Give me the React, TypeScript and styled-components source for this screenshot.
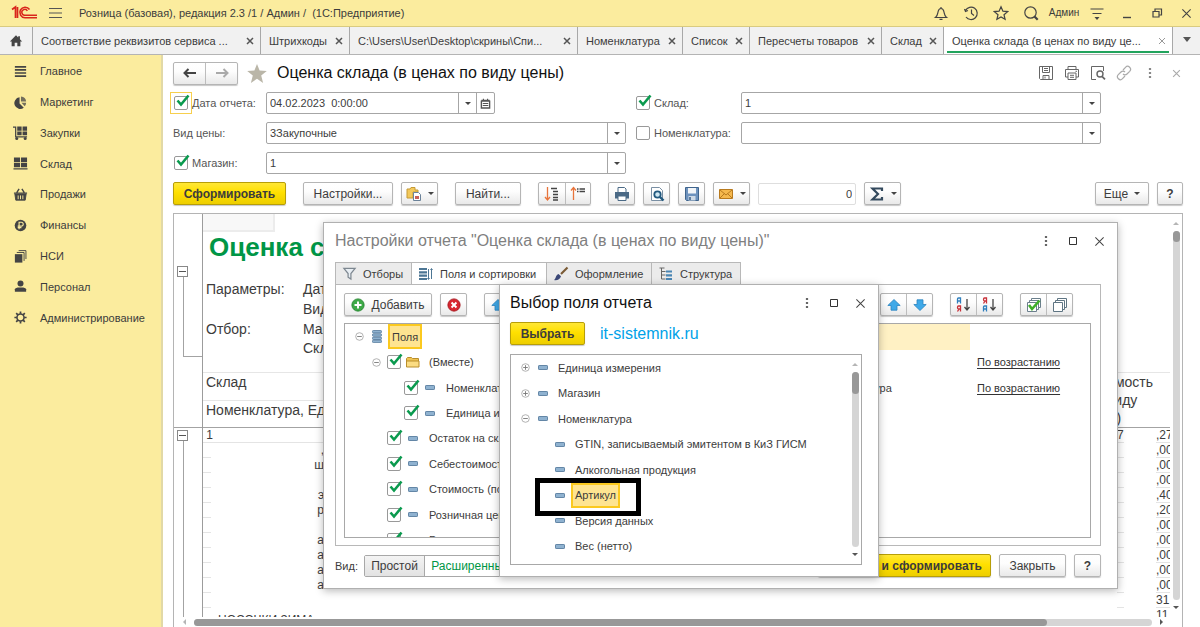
import React from "react";
import styled, { createGlobalStyle, css } from "styled-components";

const Global = createGlobalStyle`
  * { box-sizing: border-box; }
  html, body, #root { height: 100%; }
  body { margin: 0; overflow: hidden; background: #fff; }
  body, button, input { font-family: "Liberation Sans", Arial, sans-serif; font-size: 11px; color: #3c3c3c; }
  button { margin: 0; padding: 0; cursor: pointer; }
  svg { display: block; flex: none; }
`;

/* ---------- shell ---------- */

const App = styled.div`
  position: relative;
  height: 100%;
  display: flex;
  flex-direction: column;
  overflow: hidden;
`;

const TitleBar = styled.header`
  height: 27px;
  flex: none;
  display: flex;
  align-items: center;
  background: #fbec9e;
  border-bottom: 1px solid #d9cb80;
`;

const Logo = styled.div`
  width: 28px;
  margin: 0 10px 0 11px;
`;

const AppTitle = styled.h1`
  margin: 0 auto 0 17px;
  font-size: 11px;
  font-weight: 400;
  line-height: 16px;
  white-space: pre;
`;

const IconButton = styled.button<{ $w?: number }>`
  width: ${(p) => p.$w ?? 30}px;
  height: 24px;
  flex: none;
  display: flex;
  align-items: center;
  justify-content: center;
  border: 0;
  background: none;
`;

const UserName = styled.span`
  width: 36px;
  text-align: center;
  font-size: 10px;
  line-height: 16px;
`;

const TabBar = styled.nav`
  height: 28px;
  flex: none;
  display: flex;
  background: #f1f1f1;
  border-bottom: 1px solid #b4b4b4;
`;

const Tab = styled.div<{ $w: number; $active?: boolean }>`
  flex: 0 1 ${(p) => p.$w}px;
  min-width: 0;
  display: flex;
  align-items: center;
  padding: 0 4px 0 8px;
  border-right: 1px solid #a8a8a8;
  ${(p) =>
    p.$active &&
    css`
      flex-grow: 1;
      background: linear-gradient(#22a45d, #22a45d) 3px 24px / calc(100% - 6px) 2px no-repeat #fff;
    `}
`;

const TabLink = styled.a`
  flex: 1;
  min-width: 0;
  overflow: hidden;
  text-overflow: ellipsis;
  white-space: nowrap;
  line-height: 16px;
  color: inherit;
  text-decoration: none;
`;

const TabIcon = styled(IconButton)`
  border-right: 1px solid #a8a8a8;
  height: 27px;
`;

const Body = styled.div`
  flex: 1;
  min-height: 0;
  display: flex;
`;

const Sidebar = styled.nav`
  width: 163px;
  flex: none;
  background: #fbec9e;
  border-right: 2px solid #e2d9a6;
`;

const Menu = styled.ul`
  margin: 1px 0 0;
  padding: 0;
  height: 277px;
  list-style: none;
  display: grid;
  grid-auto-rows: 1fr;
`;

const MenuLink = styled.a`
  height: 100%;
  display: flex;
  align-items: center;
  gap: 12px;
  padding-left: 13px;
  color: inherit;
  text-decoration: none;
`;

const Main = styled.main`
  flex: 1;
  min-width: 0;
  display: flex;
  flex-direction: column;
  padding: 0 17px 0 10px;
`;

/* ---------- form header ---------- */

const PageHead = styled.div`
  display: flex;
  align-items: center;
  height: 36px;
  margin-right: -6px;
`;

const PageTitle = styled.h2`
  margin: 0 auto 0 1px;
  font-size: 16px;
  font-weight: 400;
  line-height: 20px;
  color: #111;
`;

const raised = css`
  border: 1px solid #b5b5b5;
  border-radius: 2px;
  background: linear-gradient(#fff, #fdfdfd 40%, #e9e9e9);
  box-shadow: 0 1px 1px rgba(0, 0, 0, 0.22);
`;

const Btn = styled.button<{ $w: number; $primary?: boolean }>`
  ${raised}
  width: ${(p) => p.$w}px;
  height: 23px;
  flex: none;
  display: flex;
  align-items: center;
  justify-content: center;
  gap: 6px;
  font-size: 12px;
  white-space: nowrap;
  ${(p) =>
    p.$primary &&
    css`
      border-color: #b79e08;
      background: linear-gradient(#ffe736, #ffe000 45%, #edce00);
      font-weight: 700;
    `}
`;

const Group = styled.div`
  ${raised}
  display: flex;
  flex: none;
  height: 23px;
`;

const GroupBtn = styled.button<{ $w?: number }>`
  width: ${(p) => p.$w ?? 26}px;
  display: flex;
  align-items: center;
  justify-content: center;
  border: 0;
  background: none;
  & + & {
    border-left: 1px solid #bdbdbd;
  }
`;

const Caret = styled.span`
  border: 3px solid transparent;
  border-top-color: #444;
  border-bottom-width: 0;
`;

const Form = styled.div`
  display: grid;
  grid-template-columns: 93px minmax(0, 1fr) 115px minmax(0, 1fr);
  row-gap: 8px;
  padding: 1px 82px 0 0;
  & > :nth-child(4n + 3) {
    margin-left: 9px;
  }
`;

const FormLabel = styled.div`
  height: 22px;
  display: flex;
  align-items: center;
  gap: 4px;
  white-space: nowrap;
  color: #555;
  & > span:first-child {
    margin-left: 1px;
  }
`;

const CheckWrap = styled.span<{ $focus?: boolean }>`
  position: relative;
  flex: none;
  display: flex;
  width: 14px;
  height: 14px;
  svg {
    position: absolute;
    left: 2px;
    top: -2px;
    pointer-events: none;
  }
  ${(p) =>
    p.$focus &&
    css`
      outline: 1px solid #f7cf4d;
      outline-offset: 3px;
    `}
`;

const CheckInput = styled.input`
  appearance: none;
  margin: 0;
  width: 14px;
  height: 14px;
  border: 1px solid #999;
  border-radius: 2px;
  background: #fff;
`;

const Combo = styled.div<{ $w?: number }>`
  height: 22px;
  ${(p) => p.$w && `width: ${p.$w}px;`}
  display: flex;
  border: 1px solid #a6a6a6;
  border-radius: 2px;
  background: #fff;
`;

const ComboInput = styled.input`
  flex: 1;
  min-width: 0;
  padding: 0 3px;
  border: 0;
  background: none;
  outline: 0;
  white-space: pre;
`;

const ComboBtn = styled.button`
  width: 18px;
  flex: none;
  display: flex;
  align-items: center;
  justify-content: center;
  border: 0;
  border-left: 1px solid #a6a6a6;
  background: none;
`;

const Toolbar = styled.div`
  display: flex;
  align-items: center;
  gap: 8px;
  margin: 8px 0;
`;

const Space = styled.span<{ $grow?: boolean }>`
  width: 1px;
  ${(p) => p.$grow && "flex: 1;"}
`;

const SumInput = styled.input`
  width: 98px;
  height: 22px;
  padding: 0 3px;
  border: 1px solid #dedede;
  border-radius: 2px;
  text-align: right;
`;

/* ---------- report ---------- */

const Report = styled.section`
  flex: 1;
  min-height: 0;
  display: flex;
  flex-direction: column;
  border: 1px solid #b4b4b4;
  border-bottom: 0;
`;

const ReportBody = styled.div`
  flex: 1;
  min-height: 0;
  display: flex;
  overflow: hidden;
`;

const Gutter = styled.div`
  width: 29px;
  flex: none;
  border-right: 1px solid #9c9c9c;
`;

const Outline = styled.div<{ $h: number; $pad: number; $end?: boolean }>`
  height: ${(p) => p.$h}px;
  padding: ${(p) => p.$pad}px 0 0 3px;
  display: flex;
  flex-direction: column;
  &::after {
    content: "";
    flex: 1;
    margin-left: 6px;
    border-left: 1px solid #a3a3a3;
    ${(p) => p.$end && "border-bottom: 1px solid #a3a3a3;"}
  }
  & + & {
    margin-top: 70px;
    border-top: 1px solid #a3a3a3;
  }
`;

const Fold = styled.button`
  width: 11px;
  height: 11px;
  display: flex;
  align-items: center;
  justify-content: center;
  border: 1px solid #888;
  background: #fff;
  &::after {
    content: "";
    width: 7px;
    height: 1px;
    background: #555;
  }
`;

const Sheet = styled.div`
  flex: 1;
  min-width: 0;
`;

const ActiveCell = styled.div`
  width: 72px;
  height: 18px;
  background: #f8f8f8;
  border: solid #ececec;
  border-width: 0 2px 2px 0;
`;

const ReportTitle = styled.h3`
  margin: 0;
  padding-left: 6px;
  font-size: 26px;
  line-height: 31px;
  color: #009646;
  white-space: nowrap;
`;

const Params = styled.dl`
  margin: 16px 0 15px;
  padding-left: 3px;
  display: grid;
  grid-template-columns: 97px 1fr;
  grid-template-rows: 20px 20px 20px 18px;
  align-items: center;
  font-size: 14px;
  line-height: 18px;
  dt { grid-column: 1; }
  dd { grid-column: 2; margin: 0; white-space: nowrap; }
`;

const SheetTable = styled.table`
  width: 100%;
  table-layout: fixed;
  border-collapse: collapse;
  th {
    padding: 0 3px;
    height: 27px;
    font-size: 14px;
    font-weight: 400;
    line-height: 18px;
    text-align: left;
    vertical-align: top;
    white-space: nowrap;
    border-top: 1px solid #e6e6e6;
  }
  th[rowspan] { padding: 0; }
  thead { border-bottom: 1px solid #a3a3a3; }
  td {
    height: 15px;
    padding: 0;
    font-size: 12px;
    line-height: 14px;
    vertical-align: top;
    white-space: nowrap;
    overflow: hidden;
  }
`;

const Line = styled.td`
  border-bottom: 1px solid #e4e4e4;
`;

const Right = styled.td`
  text-align: right;
`;

const Cut = styled.td`
  && { padding: 5px 0 0 15px; }
`;

const VScroll = styled.div`
  width: 12px;
  flex: none;
  display: flex;
  flex-direction: column;
  align-items: center;
  gap: 6px;
  padding: 8px 0;
`;

const VTrack = styled.div`
  flex: 1;
  width: 7px;
  border-radius: 4px;
  background: #d5d5d5;
`;

const VThumb = styled.div<{ $h: number }>`
  height: ${(p) => p.$h}px;
  border-radius: 4px;
  background: #989898;
`;

const Arrow = styled.span<{ $dir: "up" | "down" | "left" | "right"; $dim?: boolean }>`
  border: 3px solid transparent;
  ${(p) => {
    const c = p.$dim ? "#b5b5b5" : "#555";
    if (p.$dir === "up") return `border-bottom-color: ${c}; border-top-width: 0;`;
    if (p.$dir === "down") return `border-top-color: ${c}; border-bottom-width: 0;`;
    if (p.$dir === "left") return `border-right-color: ${c}; border-left-width: 0;`;
    return `border-left-color: ${c}; border-right-width: 0;`;
  }}
`;

const HScroll = styled.div`
  height: 10px;
  flex: none;
  display: flex;
  align-items: center;
  gap: 8px;
  padding: 0 19px 0 9px;
`;

const HTrack = styled.div`
  flex: 1;
  height: 7px;
  border-radius: 4px;
  background: #d5d5d5;
`;

const HThumb = styled.div`
  width: 89%;
  height: 7px;
  border-radius: 4px;
  background: #989898;
`;

/* ---------- floating windows ---------- */

const Window = styled.section<{ $x: number; $y: number; $w: number; $h: number; $pad: number }>`
  position: absolute;
  left: ${(p) => p.$x}px;
  top: ${(p) => p.$y}px;
  width: ${(p) => p.$w}px;
  height: ${(p) => p.$h}px;
  display: flex;
  flex-direction: column;
  padding: 0 16px 11px ${(p) => p.$pad}px;
  background: #fff;
  border: 1px solid #b0b0b0;
  box-shadow: 0 2px 8px rgba(0, 0, 0, 0.28);
`;

const WindowHead = styled.div`
  display: flex;
  align-items: center;
  height: 36px;
  flex: none;
  margin-right: -12px;
`;

const WindowTitle = styled.h2<{ $dim?: boolean }>`
  margin: 0 auto 0 0;
  font-size: 16px;
  font-weight: 400;
  line-height: 20px;
  white-space: nowrap;
  color: ${(p) => (p.$dim ? "#808080" : "#111")};
`;

const Pages = styled.div`
  display: flex;
  margin-top: 3px;
`;

const Page = styled.button<{ $w: number; $active?: boolean }>`
  width: ${(p) => p.$w}px;
  height: 23px;
  display: flex;
  align-items: center;
  gap: 6px;
  padding-left: 6px;
  white-space: nowrap;
  border: 1px solid #b8b8b8;
  border-width: 1px 1px 1px 0;
  background: #ebebeb;
  &:first-child { border-left-width: 1px; }
  ${(p) => p.$active && "background: #fff; border-bottom-color: #fff;"}
`;

const Panel = styled.div`
  flex: 1;
  min-height: 0;
  margin-top: -1px;
  display: grid;
  grid-template-columns: 1fr 379px;
  grid-template-rows: 23px minmax(0, 1fr);
  gap: 7px 12px;
  padding: 8px 9px 7px 8px;
  border: 1px solid #b8b8b8;
`;

const Tools = styled.div<{ $end?: boolean }>`
  display: flex;
  gap: ${(p) => (p.$end ? 17 : 8)}px;
  ${(p) => p.$end && "justify-content: flex-end; padding-right: 18px;"}
`;

const Box = styled.div`
  min-height: 0;
  flex: 1;
  display: flex;
  overflow: hidden;
  border: 1px solid #a8a8a8;
`;

const Tree = styled.ul<{ $h: number }>`
  flex: 1;
  height: ${(p) => p.$h}px;
  margin: 0;
  padding: 0;
  list-style: none;
  display: grid;
  grid-auto-rows: 1fr;
`;

const Node = styled.li<{ $level: number }>`
  display: flex;
  align-items: center;
  padding-left: ${(p) => 6 + p.$level * 17}px;
`;

const Slot = styled.span<{ $w: number }>`
  width: ${(p) => p.$w}px;
  flex: none;
  display: flex;
  justify-content: center;
`;

const NodeText = styled.span<{ $on?: boolean }>`
  align-self: stretch;
  display: flex;
  align-items: center;
  margin-left: 2px;
  padding: 0 2px;
  border: 2px solid transparent;
  white-space: nowrap;
  ${(p) => p.$on && "border-color: #fbc91f; background: #fee491;"}
`;

const Callout = styled.span`
  position: absolute;
  left: -34px;
  right: -21px;
  top: -5px;
  bottom: -8px;
  border: 5px solid #000;
  pointer-events: none;
`;

const Anchor = styled.span`
  position: relative;
  align-self: stretch;
  display: flex;
`;

const SortRow = styled.li<{ $on?: boolean }>`
  display: flex;
  align-items: center;
  padding-left: 105px;
  ${(p) => p.$on && "width: 257px; background: #fff1c4;"}
`;

const SortField = styled.span`
  width: 159px;
`;

const SortLink = styled.a`
  color: #333;
  text-decoration: underline;
  text-underline-offset: 2px;
`;

const Footer = styled.div`
  display: flex;
  align-items: center;
  gap: 8px;
  margin-top: 8px;
`;

const ViewLabel = styled.span`
  width: 21px;
  white-space: nowrap;
`;

const Toggle = styled.div`
  display: flex;
  height: 22px;
  margin-right: auto;
  border: 1px solid #a8a8a8;
  border-radius: 2px;
`;

const ToggleBtn = styled.button<{ $w: number; $on?: boolean }>`
  width: ${(p) => p.$w}px;
  border: 0;
  font-size: 12px;
  background: linear-gradient(#f4f4f4, #e2e2e2);
  ${(p) => p.$on && "background: #fff; color: #009646; border-left: 1px solid #a8a8a8;"}
`;

const PickRow = styled.div`
  display: flex;
  align-items: center;
  gap: 15px;
  margin: 1px 0 9px;
`;

const SiteLink = styled.a`
  font-size: 16px;
  line-height: 20px;
  color: #00a2e8;
  text-decoration: none;
`;

/* ---------- icons ---------- */

type IP = { s?: number; children?: React.ReactNode; c?: string; w?: number };
const Ico = ({ s = 16, c = "#444", w = 1, children }: IP) => (
  <svg width={s} height={s} viewBox="0 0 16 16" fill="none" stroke={c} strokeWidth={w} aria-hidden="true">
    {children}
  </svg>
);

const Cross = ({ s = 8, c = "#555", w = 3 }: IP) => (
  <Ico s={s} c={c} w={w}><path d="M2 2l12 12M14 2L2 14" /></Ico>
);
const Dots = ({ c = "#666" }: IP) => (
  <Ico c={c}><path d="M8 3v2M8 7v2M8 11v2" strokeWidth="2.2" /></Ico>
);
const Square = () => <Ico c="#333" w={1}><path d="M4.500 4.500h7v7h-7z" /></Ico>;
const Dash = () => (
  <svg width="10" height="5" viewBox="0 0 10 5" aria-hidden="true">
    <rect x=".5" y=".5" width="9" height="4" rx=".6" fill="#8fb2d0" stroke="#6386a6" />
  </svg>
);
const Stack = () => (
  <svg width="10" height="13" viewBox="0 0 10 13" fill="#8fb2d0" stroke="#54799a" strokeWidth=".8" aria-hidden="true">
    <rect x=".5" y=".5" width="9" height="2.4" rx=".8" /><rect x=".5" y="3.8" width="9" height="2.4" rx=".8" />
    <rect x=".5" y="7.1" width="9" height="2.4" rx=".8" /><rect x=".5" y="10.2" width="9" height="2.4" rx=".8" />
  </svg>
);
const FolderIco = () => (
  <svg width="14" height="12" viewBox="0 0 14 12" stroke="#b98e2c" aria-hidden="true">
    <path d="M.5 10.500V2.500l1-1h4l1 1h6v8z" fill="#f0c453" /><path d="M.5 11V5h12.500v6z" fill="#fbdc82" />
  </svg>
);
const Expander = ({ plus }: { plus?: boolean }) => (
  <svg width="9" height="9" viewBox="0 0 9 9" fill="#fff" stroke="#aaa" strokeWidth=".9" aria-hidden="true">
    <circle cx="4.500" cy="4.500" r="3.800" />
    <path d={plus ? "M2.200 4.500h4.600M4.500 2.200v4.600" : "M2.200 4.500h4.600"} stroke="#777" />
  </svg>
);
const Up = ({ flip }: { flip?: boolean }) => (
  <svg width="14" height="12" viewBox="0 0 14 12" fill="#3fa9e8" stroke="#2b83bf" strokeWidth=".8" aria-hidden="true">
    <path d={flip ? "M7 11.500L.8 5.500H4V.8h6v4.700h3.200z" : "M7 .5l6.200 6H10v4.700H4V6.500H.8z"} />
  </svg>
);
const AZ = ({ flip }: { flip?: boolean }) => {
  const a = <path d="M1.500 6.500V2q0-1 1-1h2v5.500M1.500 4h3" stroke="#2f7fbd" />;
  const ya = <path d="M4.500 14.500V9h-2Q1.500 9 1.500 10.500t1 1.500h2M3 12l-1.500 2.500" stroke="#c8313a" />;
  return (
    <Ico w={1.3}>
      <g transform={flip ? "translate(0 8)" : undefined}>{a}</g>
      <g transform={flip ? "translate(0 -8)" : undefined}>{ya}</g>
      <path d="M11 2v10M8.500 10l2.500 3 2.500-3" stroke="#444" />
    </Ico>
  );
};

const menu: [string, React.ReactNode][] = [
  ["Главное", <path d="M2 3h12M2 6.300h12M2 9.600h12M2 13h12" strokeWidth="1.800" />],
  ["Маркетинг", <g stroke="none" fill="#444"><path d="M7 2.500V9l4.500 4.500A6.200 6.200 0 1 1 7 2.500z" /><path d="M8.500 1.500A6 6 0 0 1 14 7H8.500zM9 8.300h5a6 6 0 0 1-1.500 3.800z" fillOpacity=".75" /></g>],
  ["Закупки", <g fill="#444" stroke="none"><path d="M0 1.500h3.500V12H15v1.300H2.200V2.800H0z" /><path d="M4.500 1.500h4.700V6H4.500zM10.200 1.500H15V6h-4.800zM4.500 6.800h4.700v4H4.500zM10.200 6.800H15v4h-4.800z" /><circle cx="4" cy="14.300" r="1.600" /><circle cx="13" cy="14.300" r="1.600" /></g>],
  ["Склад", <g fill="#444" stroke="none"><path d="M1 1.500h6.500v5H1zM8.500 1.500H15v5H8.500zM1 7.300h6.500v4.700H1zM8.500 7.300H15v4.700H8.500zM.5 13h15v1.500H.5z" /></g>],
  ["Продажи", <g><path d="M1 6.500h14M4 6l2.500-4M12 6L9.500 2" strokeWidth="1.500" /><path d="M2 7.500h12l-1 6.500H3z" fill="#444" /><path d="M5.500 9v4M8 9v4M10.500 9v4" stroke="#fbec9e" /></g>],
  ["Финансы", <g><circle cx="8" cy="8" r="6.200" fill="#444" stroke="none" /><path d="M6.500 12V4.500h2.300a2 2 0 0 1 0 4.200H5M5 10.300h4" stroke="#fbec9e" strokeWidth="1.200" /></g>],
  ["НСИ", <g><path d="M2 5.500h8v9H2z" fill="#444" stroke="none" /><path d="M4 3.700h7.800v9M6 1.700h7.800v9" /></g>],
  ["Персонал", <g fill="#444" stroke="none"><circle cx="8" cy="4.800" r="3.200" /><path d="M2 13.500V11q0-1.500 3-2h6q3 .5 3 2v2.500z" /></g>],
  ["Администрирование", <g><circle cx="8" cy="8" r="3.800" strokeWidth="1.700" /><path d="M8 1.500v2.500M8 12v2.500M1.500 8H4M12 8h2.500M3.400 3.400l1.800 1.800M10.800 10.800l1.800 1.800M12.600 3.400l-1.800 1.800M5.200 10.800l-1.800 1.800" strokeWidth="1.800" /></g>],
];

const tabs: [string, number][] = [
  ["Соответствие реквизитов сервиса ...", 228],
  ["Штрихкоды", 89],
  ["C:\\Users\\User\\Desktop\\скрины\\Спи...", 228],
  ["Номенклатура", 105],
  ["Список", 67],
  ["Пересчеты товаров", 132],
  ["Склад", 62],
];

/* ---------- parts ---------- */

const Check = ({ id, name, on, focus }: { id?: string; name?: string; on?: boolean; focus?: boolean }) => (
  <CheckWrap $focus={focus}>
    <CheckInput type="checkbox" id={id} aria-label={name} defaultChecked={on} />
    {on && (
      <svg width="14" height="13" viewBox="0 0 14 13" fill="none" stroke="#0a9a4e" strokeWidth="2.600" aria-hidden="true">
        <path d="M1.500 6.500l3.500 4L12.500 1.500" />
      </svg>
    )}
  </CheckWrap>
);

const Field = ({ label, value }: { label: string; value: string }) => (
  <Combo>
    <ComboInput aria-label={label} defaultValue={value} />
    <ComboBtn aria-label={`${label}: выбрать`}><Caret /></ComboBtn>
  </Combo>
);

const fields: { t: string; level: number; kind?: "root" | "folder" }[] = [
  { t: "Поля", level: 0, kind: "root" },
  { t: "(Вместе)", level: 1, kind: "folder" },
  { t: "Номенклатура", level: 2 },
  { t: "Единица измерения", level: 2 },
  { t: "Остаток на складе", level: 1 },
  { t: "Себестоимость", level: 1 },
  { t: "Стоимость (по виду)", level: 1 },
  { t: "Розничная цена", level: 1 },
  { t: "Розничная стоимость", level: 1 },
];

const choices: { t: string; level: number; exp?: "plus" | "minus" }[] = [
  { t: "Единица измерения", level: 0, exp: "plus" },
  { t: "Магазин", level: 0, exp: "plus" },
  { t: "Номенклатура", level: 0, exp: "minus" },
  { t: "GTIN, записываемый эмитентом в КиЗ ГИСМ", level: 1 },
  { t: "Алкогольная продукция", level: 1 },
  { t: "Артикул", level: 1 },
  { t: "Версия данных", level: 1 },
  { t: "Вес (нетто)", level: 1 },
];

const rows: [string, string][] = [
  [",", ",00"], ["ш", ",00"], ["", ",00"], ["э", ",40"], ["р", ",20"], ["", ",00"],
  ["а", ",00"], ["а", ",00"], ["а", ",00"], ["а", ",00"], ["", "31"],
];

const WindowButtons = () => (
  <>
    <IconButton $w={27} aria-label="Меню"><Dots /></IconButton>
    <IconButton $w={27} aria-label="Развернуть"><Square /></IconButton>
    <IconButton $w={27} aria-label="Закрыть окно"><Cross s={11} c="#444" w={1.5} /></IconButton>
  </>
);

const SettingsWindow = () => (
  <Window $x={323} $y={222} $w={795} $h={367} $pad={11} role="dialog" aria-label="Настройки отчета">
    <WindowHead>
      <WindowTitle $dim>Настройки отчета "Оценка склада (в ценах по виду цены)"</WindowTitle>
      <WindowButtons />
    </WindowHead>
    <Pages>
      <Page $w={77}>
        <Ico c="#7d8790" s={15}><path d="M2 2.500h12L9.500 8v6L6.500 12V8z" fill="#e8eef3" strokeWidth="1.300" /></Ico>Отборы
      </Page>
      <Page $w={135} $active>
        <Ico c="#4d7694"><path d="M1 3h8M1 6.300h8M1 9.600h8M1 13h8" strokeWidth="2.200" /><path d="M10.500 3v10M13.500 3v10M12.500 4l1-1.500 1 1.500M9.500 12l1 1.500 1-1.500" /></Ico>Поля и сортировки
      </Page>
      <Page $w={105}>
        <Ico><path d="M14.500 1.500L8 8" stroke="#7a5a35" strokeWidth="2.200" /><path d="M1 14c2-1 1.500-5 4.500-6l2.500 2.300c-1 3-4 4.500-7 3.700z" fill="#3c4878" stroke="none" /></Ico>Оформление
      </Page>
      <Page $w={89}>
        <Ico><path d="M1.500 2h5M3.500 2v11h4M3.500 5.500h4M3.500 9h4" stroke="#666" /><path d="M8 5.500h6M8 9.300h6M8 13h6" stroke="#4a86b4" strokeWidth="2.200" /></Ico>Структура
      </Page>
    </Pages>
    <Panel>
      <Tools>
        <Btn $w={88}>
          <Ico s={14}><circle cx="8" cy="8" r="7" fill="#3da947" stroke="#23852e" /><path d="M8 4v8M4 8h8" stroke="#fff" strokeWidth="2.200" /></Ico>Добавить
        </Btn>
        <Btn $w={27} aria-label="Удалить">
          <Ico s={14}><circle cx="8" cy="8" r="7" fill="#d8262f" stroke="#a3141c" /><path d="M5.200 5.200l5.600 5.600M10.800 5.200l-5.600 5.600" stroke="#fff" strokeWidth="2.200" /></Ico>
        </Btn>
        <Space />
        <Group>
          <GroupBtn aria-label="Поле вверх"><Up /></GroupBtn>
          <GroupBtn aria-label="Поле вниз"><Up flip /></GroupBtn>
        </Group>
      </Tools>
      <Tools $end>
        <Group>
          <GroupBtn $w={25} aria-label="Вверх"><Up /></GroupBtn>
          <GroupBtn aria-label="Вниз"><Up flip /></GroupBtn>
        </Group>
        <Group>
          <GroupBtn $w={25} aria-label="По возрастанию"><AZ /></GroupBtn>
          <GroupBtn aria-label="По убыванию"><AZ flip /></GroupBtn>
        </Group>
        <Group>
          <GroupBtn $w={25} aria-label="Включить все">
            <Ico c="#6b7f8c"><path d="M5.500 4V1.500h9v9H12M3.500 6V3.500h9v9H10M1.500 5.500h9v9h-9z" fill="#fff" /><path d="M3 8l3 4 7.500-8.500" stroke="#3fae29" strokeWidth="2.600" /></Ico>
          </GroupBtn>
          <GroupBtn aria-label="Выключить все">
            <Ico c="#5f7583"><path d="M5.500 4V1.500h9v9H12M3.500 6V3.500h9v9H10M1.500 5.500h9v9h-9z" fill="#fff" /></Ico>
          </GroupBtn>
        </Group>
      </Tools>
      <Box>
        <Tree $h={229}>
          {fields.map((f) => (
            <Node key={f.t} $level={f.level}>
              <Slot $w={17}>{f.kind && <Expander />}</Slot>
              {f.kind !== "root" && <Slot $w={17}><Check name={f.t} on /></Slot>}
              <Slot $w={f.kind === "root" ? 18 : 21}>
                {f.kind === "root" ? <Stack /> : f.kind === "folder" ? <FolderIco /> : <Dash />}
              </Slot>
              <NodeText $on={f.kind === "root"}>{f.t}</NodeText>
            </Node>
          ))}
        </Tree>
      </Box>
      <Box>
        <Tree $h={77}>
          <SortRow $on />
          <SortRow><SortField>Склад</SortField><SortLink href="#asc">По возрастанию</SortLink></SortRow>
          <SortRow><SortField>Номенклатура</SortField><SortLink href="#asc">По возрастанию</SortLink></SortRow>
        </Tree>
      </Box>
    </Panel>
    <Footer>
      <ViewLabel>Вид:</ViewLabel>
      <Toggle>
        <ToggleBtn $w={59}>Простой</ToggleBtn>
        <ToggleBtn $w={92} $on>Расширенный</ToggleBtn>
      </Toggle>
      <Btn $w={173} $primary>Закрыть и сформировать</Btn>
      <Btn $w={67}>Закрыть</Btn>
      <Btn $w={27}><b>?</b></Btn>
    </Footer>
  </Window>
);

const PickWindow = () => (
  <Window $x={499} $y={284} $w={380} $h={293} $pad={10} role="dialog" aria-label="Выбор поля отчета">
    <WindowHead>
      <WindowTitle>Выбор поля отчета</WindowTitle>
      <WindowButtons />
    </WindowHead>
    <PickRow>
      <Btn $w={75} $primary>Выбрать</Btn>
      <SiteLink href="#site">it-sistemnik.ru</SiteLink>
    </PickRow>
    <Box>
      <Tree $h={204}>
        {choices.map((f) => (
          <Node key={f.t} $level={f.level}>
            <Slot $w={17}>{f.exp && <Expander plus={f.exp === "plus"} />}</Slot>
            <Slot $w={18}><Dash /></Slot>
            <Anchor>
              <NodeText $on={f.t === "Артикул"}>{f.t}</NodeText>
              {f.t === "Артикул" && <Callout />}
            </Anchor>
          </Node>
        ))}
      </Tree>
      <VScroll>
        <Arrow $dir="up" $dim />
        <VTrack><VThumb $h={22} /></VTrack>
        <Arrow $dir="down" />
      </VScroll>
    </Box>
  </Window>
);

export default function Root() {
  return (
    <App>
      <Global />
      <TitleBar>
        <Logo>
          <svg width="28" height="16" viewBox="0 0 28 16" fill="none" stroke="#d9261c" aria-label="1С" role="img">
            <path d="M1 4.500l3.500-2.500V13M6.500 13V2" strokeWidth="1.700" />
            <path d="M18.500 4.500A5.300 5.300 0 1 0 14 12.800H26" strokeWidth="1.600" />
            <path d="M16.300 6A2.900 2.900 0 1 0 14 10.200H26" strokeWidth="1.500" />
          </svg>
        </Logo>
        <svg width="13" height="12" viewBox="0 0 13 12" stroke="#555" strokeWidth="1.200" aria-hidden="true"><path d="M0 1.500h13M0 6h13M0 10.500h13" /></svg>
        <AppTitle>{"Розница (базовая), редакция 2.3 /1 / Админ /  (1С:Предприятие)"}</AppTitle>
        <IconButton aria-label="Уведомления"><Ico w={1.2}><path d="M2.500 12.500h11c-2-1.500-2-3-2.500-5.500C10.500 4.500 9.500 3.500 8 3.500S5.500 4.500 5 7c-.5 2.500-.5 4-2.500 5.500zM8 3.500V2M6.500 14.300h3" /></Ico></IconButton>
        <IconButton aria-label="История"><Ico w={1.2}><path d="M2.500 5.500A6.200 6.200 0 1 1 3 12M1.500 4l1 2.500L5 5.500M8.500 4.500v4l2.500 2" /></Ico></IconButton>
        <IconButton aria-label="Избранное"><Ico w={1.2}><path d="M8 1.800l1.900 4.400 4.700.4-3.600 3.100 1.100 4.600L8 11.900l-4.100 2.400L5 9.700 1.400 6.600l4.700-.4z" /></Ico></IconButton>
        <IconButton aria-label="Поиск"><Ico w={1.2}><circle cx="7.500" cy="7.500" r="5.700" /><path d="M11.500 11.500l3.200 3.200" strokeWidth="2.200" /></Ico></IconButton>
        <UserName>Админ</UserName>
        <IconButton aria-label="Сервис"><Ico w={1.2}><path d="M1.500 4h13M3.500 8.500h9" /><path d="M5.500 12h5L8 15z" fill="#444" stroke="none" /></Ico></IconButton>
        <IconButton aria-label="Свернуть"><Ico w={1.4}><path d="M4 12.500h8" /></Ico></IconButton>
        <IconButton aria-label="Восстановить"><Ico w={1.2}><path d="M4 6.500h6v5.500H4zM6 6V4h6.500v6H10" /></Ico></IconButton>
        <IconButton $w={28} aria-label="Выход"><Cross s={11} c="#444" w={1.6} /></IconButton>
      </TitleBar>
      <TabBar>
        <TabIcon $w={33} aria-label="Начальная страница">
          <Ico s={14}><path d="M8 1.500L1 8.500h2V14h3.500v-4h3v4H13V8.500h2L12.500 6V2.500h-2V4z" fill="#444" stroke="none" /></Ico>
        </TabIcon>
        {tabs.map(([t, w]) => (
          <Tab key={t} $w={w}>
            <TabLink href="#tab">{t}</TabLink>
            <IconButton $w={13} aria-label="Закрыть вкладку"><Cross /></IconButton>
          </Tab>
        ))}
        <Tab $w={229} $active>
          <TabLink href="#tab">Оценка склада (в ценах по виду це...</TabLink>
          <IconButton $w={13} aria-label="Закрыть вкладку"><Cross c="#999" w={2} /></IconButton>
        </Tab>
        <IconButton $w={27} aria-label="Все вкладки"><svg width="8" height="5" aria-hidden="true"><path d="M0 0h8L4 5z" fill="#555" /></svg></IconButton>
      </TabBar>
      <Body>
        <Sidebar>
          <Menu>
            {menu.map(([t, icon]) => (
              <li key={t}><MenuLink href="#section"><Ico s={15}>{icon}</Ico>{t}</MenuLink></li>
            ))}
          </Menu>
        </Sidebar>
        <Main>
          <PageHead>
            <Group>
              <GroupBtn $w={31} aria-label="Назад"><Ico c="#444" w={2}><path d="M14 8H3M6.500 4L2.500 8l4 4" /></Ico></GroupBtn>
              <GroupBtn $w={32} aria-label="Вперед"><Ico c="#aaa" w={2}><path d="M2 8h11M9.500 4l4 4-4 4" /></Ico></GroupBtn>
            </Group>
            <IconButton $w={38} aria-label="В избранное">
              <svg width="20" height="19" viewBox="0 0 20 19" aria-hidden="true"><path d="M10 0l2.600 6.600 7.200.4-5.600 4.500L16.100 19 10 14.700 3.900 19l1.900-7.500L.2 7l7.200-.4z" fill="#bab6a8" /></svg>
            </IconButton>
            <PageTitle>Оценка склада (в ценах по виду цены)</PageTitle>
            <IconButton $w={26} aria-label="Сохранить"><Ico c="#666"><path d="M1.500 1.500h13v13h-12l-1-1zM4.500 1.500v6h7v-6M6 3.500h4M6 5.500h4M5 14.500v-4h6v4M7 11.500v2" /></Ico></IconButton>
            <IconButton $w={26} aria-label="Печать"><Ico c="#666"><path d="M4 4.500v-3h8v3M4 12H1.500V4.500h13V12H12M4 8h8v6.500H4zM6 10.300h4M6 12.300h4M11.500 6.300h1.500" /></Ico></IconButton>
            <IconButton $w={26} aria-label="Просмотр"><Ico c="#666"><path d="M6 14.500H1.500v-13h12V6" /><circle cx="10" cy="9" r="3" strokeWidth="1.400" /><path d="M12 11.300l3 3" strokeWidth="1.800" /></Ico></IconButton>
            <IconButton $w={26} aria-label="Ссылка"><Ico c="#aaa" w={1.2}><path d="M7 5l2.500-2.700a2.900 2.900 0 0 1 4.200 4L11 9a2.800 2.800 0 0 1-4 0M9 11l-2.500 2.700a2.900 2.900 0 0 1-4.200-4L5 7a2.800 2.800 0 0 1 4 0" /></Ico></IconButton>
            <IconButton $w={26} aria-label="Ещё"><Dots c="#888" /></IconButton>
            <IconButton $w={26} aria-label="Закрыть"><Cross s={9} c="#aaa" w={2} /></IconButton>
          </PageHead>
          <Form>
            <FormLabel><Check id="date" on focus /><label htmlFor="date">Дата отчета:</label></FormLabel>
            <Combo $w={229}>
              <ComboInput aria-label="Дата отчета" defaultValue="04.02.2023  0:00:00" />
              <ComboBtn aria-label="Выбрать дату"><Caret /></ComboBtn>
              <ComboBtn aria-label="Календарь"><Ico s={11} c="#555"><path d="M2 4.500h12v10H2zM2 3.500h12" strokeWidth="2" /><path d="M5 1v3M11 1v3M4 8h8M4 11h8" strokeWidth="1.600" /></Ico></ComboBtn>
            </Combo>
            <FormLabel><Check id="wh" on /><label htmlFor="wh">Склад:</label></FormLabel>
            <Field label="Склад" value="1" />
            <FormLabel>Вид цены:</FormLabel>
            <Field label="Вид цены" value="3Закупочные" />
            <FormLabel><Check id="item" /><label htmlFor="item">Номенклатура:</label></FormLabel>
            <Field label="Номенклатура" value="" />
            <FormLabel><Check id="shop" on /><label htmlFor="shop">Магазин:</label></FormLabel>
            <Field label="Магазин" value="1" />
          </Form>
          <Toolbar>
            <Btn $w={113} $primary>Сформировать</Btn>
            <Space />
            <Btn $w={90}>Настройки...</Btn>
            <Btn $w={37} aria-label="Варианты">
              <Ico><path d="M1 12V3h3l1-1.500h4V4h3v2H7v6z" fill="#f3c95c" stroke="#c59a35" /><path d="M7.500 6.500h5l2 2v6h-7z" fill="#fff" stroke="#6b8299" /><path d="M9 10h4v3H9z" fill="#c9605a" stroke="none" /></Ico><Caret />
            </Btn>
            <Space />
            <Btn $w={66}>Найти...</Btn>
            <Space />
            <Group>
              <GroupBtn aria-label="Развернуть группы"><Ico><path d="M3.500 1v12M1 11l2.500 3L6 11" stroke="#e8743b" strokeWidth="1.300" /><path d="M7 2.500h6M9 5.500h5M9 8.500h5M9 11.500h5M9 14h5" strokeWidth="1.300" /></Ico></GroupBtn>
              <GroupBtn $w={25} aria-label="Свернуть группы"><Ico><path d="M3.500 14V2M1 4.500l2.500-3 2.500 3" stroke="#e8743b" strokeWidth="1.300" /><path d="M7 3h1.500M9.500 3H15M9.500 5.500H15M7 5.500h1.500" strokeWidth="1.500" /></Ico></GroupBtn>
            </Group>
            <Space />
            <Btn $w={27} aria-label="Печать отчета"><Ico><path d="M4 6V1.500h6.500L12 3v3" fill="#fff" stroke="#4b6a86" /><path d="M1 6h14v6.500H1z" fill="#4b6a86" stroke="none" /><path d="M4 10h8v4.500H4z" fill="#fff" stroke="#4b6a86" /></Ico></Btn>
            <Btn $w={27} aria-label="Предпросмотр"><Ico><path d="M2.500 1.500h8l3 3v10h-11z" fill="#fff" stroke="#7a8fa3" /><circle cx="8.500" cy="8.500" r="3.200" fill="#cde6f2" stroke="#22597f" strokeWidth="1.800" /><path d="M11 11l3.500 3.500" stroke="#22597f" strokeWidth="2.400" /></Ico></Btn>
            <Btn $w={27} aria-label="Сохранить отчет"><Ico><path d="M1.500 1.500h13v13h-12l-1-1z" fill="#6d92bd" stroke="#3f648d" /><path d="M4 2h8v5.500H4z" fill="#f2f5f8" stroke="none" /><path d="M4.500 10h7v4.500h-7z" fill="#cfdae6" stroke="none" /><path d="M6 11v3" stroke="#3f648d" strokeWidth="1.600" /></Ico></Btn>
            <Btn $w={37} aria-label="Отправить"><Ico><path d="M1.500 3.500h13v9h-13z" fill="#f5b84d" stroke="#b87a1e" /><path d="M2 4l6 5 6-5M2 12l4.500-4.500M14 12L9.500 7.500" stroke="#b87a1e" /></Ico><Caret /></Btn>
            <SumInput aria-label="Сумма" defaultValue="0" />
            <Btn $w={37} aria-label="Итоги"><Ico c="#344a5e"><path d="M13 5V2.500H3.500L9 8l-5.500 5.500H13V11" strokeWidth="2.200" /></Ico><Caret /></Btn>
            <Space $grow />
            <Btn $w={54}>Еще<Caret /></Btn>
            <Btn $w={26}><b>?</b></Btn>
          </Toolbar>
          <Report>
            <ReportBody>
              <Gutter>
                <Outline $h={143} $pad={52} $end><Fold aria-label="Свернуть шапку" /></Outline>
                <Outline $h={200} $pad={2}><Fold aria-label="Свернуть группу" /></Outline>
              </Gutter>
              <Sheet>
                <ActiveCell />
                <ReportTitle>Оценка склада</ReportTitle>
                <Params>
                  <dt>Параметры:</dt><dd>Дата отчета</dd>
                  <dd>Вид цены</dd>
                  <dt>Отбор:</dt><dd>Магазин</dd>
                  <dd>Склад</dd>
                </Params>
                <SheetTable>
                  <colgroup><col width="8" /><col width="113" /><col /><col width="34" /><col width="7" /><col width="32" /><col width="14" /></colgroup>
                  <thead>
                    <tr><th colSpan={3}>Склад</th><th colSpan={4} rowSpan={2}>Стоимость<br />(по виду<br />цены)</th></tr>
                    <tr><th colSpan={3}>Номенклатура, Единица измерения</th></tr>
                  </thead>
                  <tbody>
                    <tr><Line colSpan={2}>&nbsp;1</Line><td /><td /><Line>7</Line><td /><Line>,27</Line></tr>
                    {rows.map(([a, b], i) => (
                      <tr key={i}><Line /><Right>{a}</Right><td /><td /><Line /><td /><Line>{b}</Line></tr>
                    ))}
                    <tr><Cut colSpan={3}>НОСОЧКИ ЗИМА</Cut><td /><td /><td /><td>11</td></tr>
                  </tbody>
                </SheetTable>
              </Sheet>
              <VScroll>
                <Arrow $dir="up" $dim />
                <VTrack><VThumb $h={11} /></VTrack>
                <Arrow $dir="down" />
              </VScroll>
            </ReportBody>
            <HScroll>
              <Arrow $dir="left" $dim />
              <HTrack><HThumb /></HTrack>
              <Arrow $dir="right" />
            </HScroll>
          </Report>
        </Main>
      </Body>
      <SettingsWindow />
      <PickWindow />
    </App>
  );
}
